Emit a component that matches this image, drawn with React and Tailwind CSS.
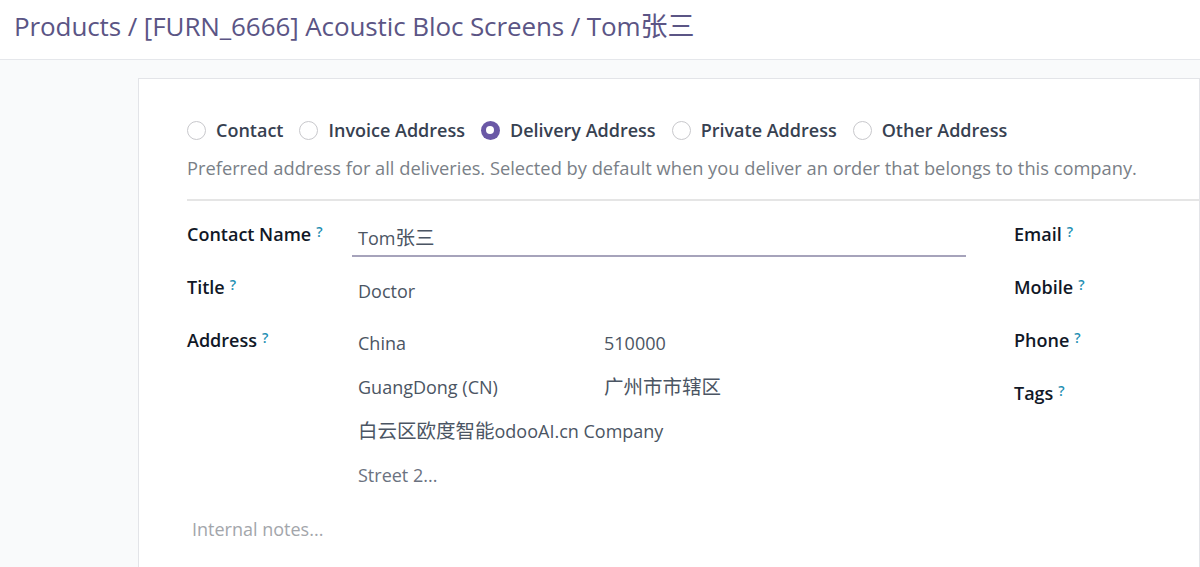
import React from "react";

const font = { fontFamily: '"Open Sans", "Noto Sans CJK SC", sans-serif' };

function Q() {
  return <sup className="ml-[5px] text-[14px] font-semibold text-[#1f8fb3] relative -top-[4px]">?</sup>;
}

function Radio({ checked, label }) {
  return (
    <label className="flex items-center gap-[10px] mr-[16px]">
      {checked ? (
        <span className="w-[19px] h-[19px] rounded-full bg-[#6a58a6] flex items-center justify-center">
          <span className="w-[8px] h-[8px] rounded-full bg-white" />
        </span>
      ) : (
        <span className="w-[19px] h-[19px] rounded-full border border-[#c8c8cc] bg-white" />
      )}
      <span className="text-[18px] font-semibold text-[#374151]">{label}</span>
    </label>
  );
}

function Label({ children }) {
  return (
    <div className="text-[18px] font-semibold text-[#111827] h-[44px] leading-[26px]">
      {children}
      <Q />
    </div>
  );
}

const cjk = "text-[19.5px]";

export default function App() {
  return (
    <div className="w-[1200px] h-[567px] overflow-hidden bg-[#f9fafb]" style={font}>
      <div className="h-[60px] bg-white border-b border-[#e5e7eb] flex items-center pl-[14px] pb-[6px]">
        <div className="text-[26px] text-[#5b5585] tracking-[-0.1px]">
          Products / [FURN_6666] Acoustic Bloc Screens / Tom<span className="text-[27px]">张三</span>
        </div>
      </div>
      <div className="pl-[138px] pt-[18px]">
        <div className="bg-white border border-[#e3e4e8] h-[600px] pl-[48px] pt-[37px]">
          <div className="flex items-center h-[28px]">
            <Radio label="Contact" />
            <Radio label="Invoice Address" />
            <Radio checked label="Delivery Address" />
            <Radio label="Private Address" />
            <Radio label="Other Address" />
          </div>
          <div className="mt-[11px] text-[18.3px] text-[#7a7f87] leading-[26px]">
            Preferred address for all deliveries. Selected by default when you deliver an order that belongs to this company.
          </div>
          <div className="mt-[18px] border-t-2 border-[#e5e5e5]" />
          <div className="flex pt-[20px]">
            <div className="w-[165px]">
              <div className="h-[53px]"><Label>Contact Name</Label></div>
              <div className="h-[53px]"><Label>Title</Label></div>
              <Label>Address</Label>
            </div>
            <div className="w-[614px]">
              <div className="h-[53px]">
                <div className="border-b-2 border-[#a6a3bb] h-[36px] pl-[6px] pt-[4px] text-[18px] text-[#4b5563] leading-[26px]">Tom<span className={cjk}>张三</span></div>
              </div>
              <div className="h-[53px] pl-[6px] pt-[4px] text-[18px] text-[#4b5563] leading-[26px]">Doctor</div>
              <div className="pl-[6px] pt-[3px] text-[18px] text-[#4b5563] leading-[26px]">
                <div className="grid grid-cols-[246px_1fr] gap-y-[18px]">
                  <div>China</div>
                  <div>510000</div>
                  <div>GuangDong (CN)</div>
                  <div className={cjk}>广州市市辖区</div>
                  <div className="col-span-2"><span className={cjk}>白云区欧度智能</span>odooAI.cn Company</div>
                  <div className="col-span-2 text-[#6b7280]">Street 2...</div>
                </div>
              </div>
            </div>
            <div className="ml-[48px]">
              <div className="h-[53px]"><Label>Email</Label></div>
              <div className="h-[53px]"><Label>Mobile</Label></div>
              <div className="h-[53px]"><Label>Phone</Label></div>
              <div className="h-[53px]"><Label>Tags</Label></div>
            </div>
          </div>
          <div className="pl-[5px] mt-[28px] text-[18px] text-[#a3a6ab] leading-[26px]">Internal notes...</div>
        </div>
      </div>
    </div>
  );
}
